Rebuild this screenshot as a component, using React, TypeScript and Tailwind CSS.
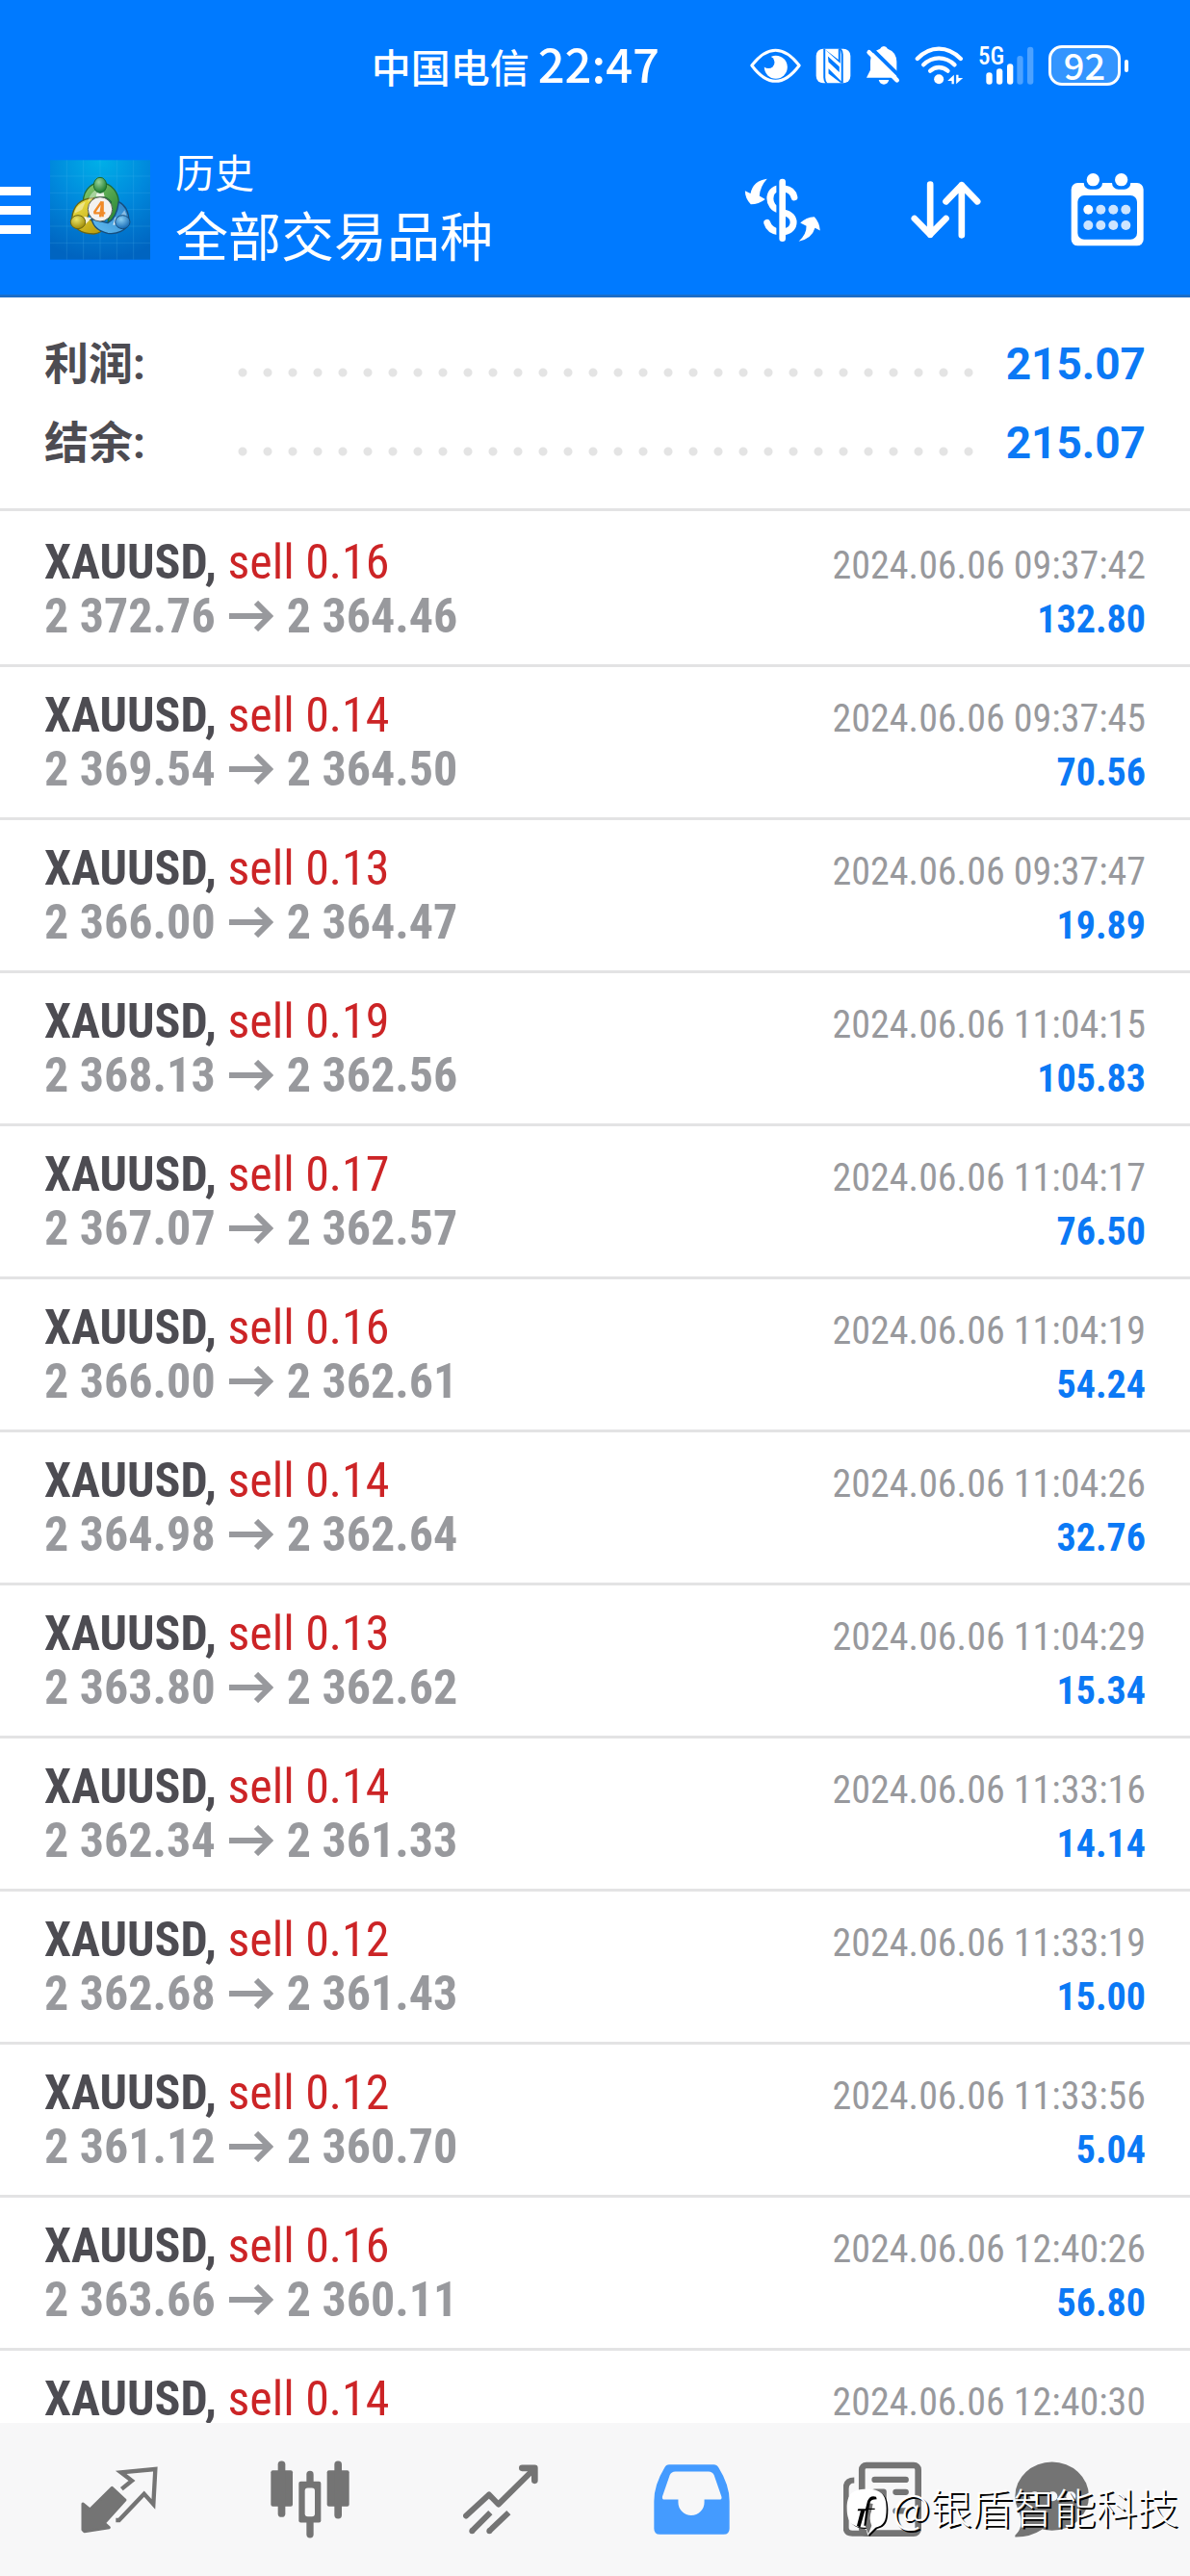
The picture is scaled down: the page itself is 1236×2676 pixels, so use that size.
import type { ReactNode } from 'react';

type Deal = { volume: string; open: string; close: string; time: string; profit: string };

const deals: Deal[] = [
  { volume: '0.16', open: '2 372.76', close: '2 364.46', time: '09:37:42', profit: '132.80' },
  { volume: '0.14', open: '2 369.54', close: '2 364.50', time: '09:37:45', profit: '70.56' },
  { volume: '0.13', open: '2 366.00', close: '2 364.47', time: '09:37:47', profit: '19.89' },
  { volume: '0.19', open: '2 368.13', close: '2 362.56', time: '11:04:15', profit: '105.83' },
  { volume: '0.17', open: '2 367.07', close: '2 362.57', time: '11:04:17', profit: '76.50' },
  { volume: '0.16', open: '2 366.00', close: '2 362.61', time: '11:04:19', profit: '54.24' },
  { volume: '0.14', open: '2 364.98', close: '2 362.64', time: '11:04:26', profit: '32.76' },
  { volume: '0.13', open: '2 363.80', close: '2 362.62', time: '11:04:29', profit: '15.34' },
  { volume: '0.14', open: '2 362.34', close: '2 361.33', time: '11:33:16', profit: '14.14' },
  { volume: '0.12', open: '2 362.68', close: '2 361.43', time: '11:33:19', profit: '15.00' },
  { volume: '0.12', open: '2 361.12', close: '2 360.70', time: '11:33:56', profit: '5.04' },
  { volume: '0.16', open: '2 363.66', close: '2 360.11', time: '12:40:26', profit: '56.80' },
  { volume: '0.14', open: '', close: '', time: '12:40:30', profit: '' },
];

function EyeIcon() {
  return (
    <svg className="h-[36px] w-[53px]" viewBox="59 59 158 108" aria-hidden="true">
      <path d="M64 113C90 80 115 66 138 66S186 80 212 113C186 148 161 162 138 162S90 148 64 113Z" fill="none" stroke="#fff" strokeWidth="9" strokeLinejoin="round" />
      <circle cx="139" cy="118" r="36" fill="#fff" />
      <circle cx="116" cy="103" r="19" fill="#007aff" />
    </svg>
  );
}

function NfcIcon() {
  return (
    <svg className="h-[37px] w-[37px]" viewBox="263 58 110 112" aria-hidden="true">
      <rect x="264" y="60" width="108" height="108" rx="22" fill="#fff" />
      <path d="M287 60H293V150Q293 162 300 169H294Q287 162 287 150Z M290 60 340 106V60H334V94Z" fill="#007aff" />
      <path d="M349 168H343V78Q343 66 336 59H342Q349 66 349 78Z" fill="#007aff" />
      <path d="M301 84 337 116V134L303 102Z M303 122 347 166H340L303 138Z" fill="#007aff" />
    </svg>
  );
}

function BellOffIcon() {
  return (
    <svg className="h-[40px] w-[36px]" viewBox="418 54 106 120" aria-hidden="true">
      <path d="M474 54q8 0 12 8q27 10 28 40V152H420l12-24V100q0-28 30-38q4-8 12-8Z" fill="#fff" />
      <path d="M420 46 536 160" stroke="#007aff" strokeWidth="12" />
      <path d="M428 73 515 160" stroke="#fff" strokeWidth="14" strokeLinecap="round" />
      <path d="M458 159H490Q486 173 474 173T458 159Z" fill="#fff" />
    </svg>
  );
}

function WifiIcon() {
  return (
    <svg className="h-[40px] w-[51px]" viewBox="568 54 152 120" aria-hidden="true">
      <g fill="none" stroke="#fff" strokeWidth="13" strokeLinecap="round">
        <path d="M576 93Q606 62 643 62T711 93" />
        <path d="M595 112Q616 91 643 91T692 112" />
        <path d="M616 131Q628 120 643 120T671 131" />
      </g>
      <circle cx="643" cy="157" r="15" fill="#fff" />
      <path d="M690 143V172H683V162H670Z M697 172V143H704V153H718Z" fill="#fff" />
    </svg>
  );
}

function SignalIcon() {
  return (
    <div className="relative h-[40px] w-[58px]">
      <svg className="h-[40px] w-[58px]" viewBox="764 54 174 120" aria-hidden="true">
        <g fill="#fff">
          <rect x="789" y="136" width="19" height="37" rx="9" />
          <rect x="821" y="124" width="19" height="49" rx="9" />
          <rect x="854" y="109" width="19" height="64" rx="9" />
        </g>
        <g fill="#4da2ff">
          <rect x="885" y="84" width="19" height="89" rx="9" />
          <rect x="917" y="56" width="19" height="117" rx="9" />
        </g>
      </svg>
      <span className="absolute left-0 top-0 font-['Roboto_Condensed',sans-serif] text-[25px] font-medium leading-[22px]">5G</span>
    </div>
  );
}

function Battery() {
  return (
    <div className="flex items-center gap-[4px]">
      <div className="flex h-[42px] w-[75px] items-center justify-center rounded-[14px] border-[3px] border-white bg-[#3395ff] pb-[2px] text-[38px] font-medium leading-[34px]">
        92
      </div>
      <div className="h-[13px] w-[4px] rounded-full bg-white" />
    </div>
  );
}

function AppLogo() {
  return (
    <svg className="h-[104px] w-[104px] shrink-0" viewBox="24 20 312 310" aria-hidden="true">
      <defs>
        <radialGradient id="sky" cx="0.5" cy="0" r="1">
          <stop offset="0" stopColor="#00b0e8" />
          <stop offset="0.5" stopColor="#0088dc" />
          <stop offset="1" stopColor="#0064c0" />
        </radialGradient>
        <linearGradient id="green" x1="0" y1="0" x2="1" y2="1">
          <stop offset="0" stopColor="#8ccc70" />
          <stop offset="1" stopColor="#1f8030" />
        </linearGradient>
        <linearGradient id="gold" x1="0" y1="0" x2="0.7" y2="1">
          <stop offset="0" stopColor="#f2e84a" />
          <stop offset="1" stopColor="#bca010" />
        </linearGradient>
        <linearGradient id="blue" x1="1" y1="0" x2="0" y2="1">
          <stop offset="0" stopColor="#2a80c8" />
          <stop offset="1" stopColor="#64c0f4" />
        </linearGradient>
        <radialGradient id="greenBall" cx="0.4" cy="0.3" r="0.7">
          <stop offset="0" stopColor="#9ad49a" />
          <stop offset="1" stopColor="#1a7a2c" />
        </radialGradient>
        <radialGradient id="goldBall" cx="0.4" cy="0.3" r="0.7">
          <stop offset="0" stopColor="#ece66a" />
          <stop offset="1" stopColor="#a08c08" />
        </radialGradient>
        <radialGradient id="blueBall" cx="0.4" cy="0.3" r="0.7">
          <stop offset="0" stopColor="#8cd0f4" />
          <stop offset="1" stopColor="#1468b4" />
        </radialGradient>
      </defs>
      <rect x="24" y="20" width="312" height="310" fill="url(#sky)" />
      <path d="M76 20V330M128 20V330M180 20V330M232 20V330M284 20V330M24 70H336M24 122H336M24 174H336M24 226H336M24 278H336" stroke="#5cc4f4" strokeOpacity="0.28" strokeWidth="2" />
      <g strokeLinejoin="round">
        <path d="M128 166C122 118 148 92 180 90C216 92 240 120 238 160C234 188 220 206 204 216L214 150C196 128 162 130 150 160Z" fill="url(#green)" stroke="#216b32" strokeWidth="4" />
        <path d="M160 138C122 140 96 158 92 202C94 230 120 250 160 250C178 248 184 242 192 232L140 200Z" fill="url(#gold)" stroke="#6a6412" strokeWidth="4" />
        <path d="M238 150C262 162 270 186 270 214C262 240 232 252 204 248C176 242 158 226 154 204L204 216C222 206 234 184 238 150Z" fill="url(#blue)" stroke="#164f80" strokeWidth="4" />
        <path d="M142 150C148 120 168 112 174 112L176 122L164 134Z M100 186C104 164 122 154 134 150L124 174Z M256 176C264 192 264 204 258 214L240 198Z" fill="#fff" opacity="0.4" />
        <path d="M172 118H190L194 134H166Z M130 196 154 200 134 220Z M228 196 220 222 236 220Z" fill="#fff" opacity="0.85" />
        <ellipse cx="180" cy="98" rx="20" ry="24" fill="url(#greenBall)" stroke="#1c6b2c" strokeWidth="3" />
        <ellipse cx="111" cy="213" rx="23" ry="21" fill="url(#goldBall)" stroke="#6a6412" strokeWidth="3" />
        <ellipse cx="250" cy="213" rx="23" ry="21" fill="url(#blueBall)" stroke="#164f80" strokeWidth="3" />
      </g>
      <circle cx="180" cy="173" r="38" fill="#f3f2f0" stroke="#55605a" strokeWidth="3" />
      <path d="M185 149 163 181V185H196M187 149 180 197M188 149V197" fill="none" stroke="#f08a28" strokeWidth="7" strokeLinejoin="round" />
    </svg>
  );
}

function CurrencyIcon() {
  return (
    <svg className="h-[67px] w-[80px]" viewBox="25 28 240 202" aria-hidden="true">
      <g fill="none" stroke="#fff" strokeWidth="21">
        <path d="M134 60C96 64 96 118 134 128" />
        <path d="M150 61Q176 64 181 88" strokeLinecap="round" />
        <path d="M150 137C188 144 188 190 150 196" />
        <path d="M96 168Q103 192 134 197" strokeLinecap="round" />
      </g>
      <rect x="125" y="40" width="12" height="180" fill="#007aff" />
      <rect x="134" y="30" width="20" height="197" rx="10" fill="#fff" />
      <path d="M96 30Q52 36 44 76L27 68Q27 92 45 110Q70 110 90 94L72 84Q74 54 96 30Z" fill="#fff" />
      <path d="M195 226Q220 204 219 178L200 168Q218 150 244 149Q260 166 262 192L246 184Q236 218 195 226Z" fill="#fff" />
    </svg>
  );
}

function SortIcon() {
  return (
    <svg className="h-[60px] w-[73px]" viewBox="617 114 218 180" aria-hidden="true">
      <g fill="none" stroke="#fff" strokeWidth="20" strokeLinecap="round" strokeLinejoin="round">
        <path d="M677 125V281M628 231 677 281 726 231" />
        <path d="M775 283V127M726 178 775 127 824 178" />
      </g>
    </svg>
  );
}

function CalendarIcon() {
  return (
    <svg className="h-[76px] w-[76px]" viewBox="1114 86 228 228" aria-hidden="true">
      <rect x="1116" y="116" width="225" height="196" rx="20" fill="#fff" />
      <rect x="1136" y="155" width="185" height="137" rx="20" fill="#007aff" />
      <rect x="1155" y="86" width="58" height="50" rx="20" fill="#007aff" />
      <rect x="1243" y="86" width="58" height="50" rx="20" fill="#007aff" />
      <circle cx="1184" cy="106" r="20" fill="#fff" />
      <circle cx="1272" cy="106" r="20" fill="#fff" />
      <circle cx="1169" cy="199" r="15" fill="#fff" />
      <g fill="#cce4ff">
        <circle cx="1208" cy="199" r="15" />
        <circle cx="1247" cy="199" r="15" />
        <circle cx="1286" cy="199" r="15" />
        <circle cx="1169" cy="248" r="15" />
        <circle cx="1208" cy="248" r="15" />
        <circle cx="1247" cy="248" r="15" />
        <circle cx="1286" cy="248" r="15" />
      </g>
    </svg>
  );
}

function QuotesIcon() {
  return (
    <svg className="h-[70px] w-[80px]" viewBox="133 364 240 210" aria-hidden="true">
      <path d="M139 481 161 499 230 431 271 469 206 541 221 555 144 567 139 562Z" fill="#747474" stroke="#747474" strokeWidth="9" strokeLinejoin="round" />
      <path d="M260 435 292 409 258 383 365 373 359 482 330 450 252 532H242" fill="none" stroke="#747474" strokeWidth="13" />
    </svg>
  );
}

function CandlesIcon() {
  return (
    <svg className="h-[81px] w-[82px]" viewBox="722 347 246 242" aria-hidden="true">
      <g fill="#747474">
        <rect x="723" y="377" width="68" height="113" rx="6" />
        <rect x="745" y="348" width="23" height="175" rx="11" />
        <rect x="898" y="377" width="69" height="113" rx="6" />
        <rect x="921" y="348" width="23" height="180" rx="11" />
        <rect x="834" y="379" width="22" height="209" rx="11" />
        <rect x="810" y="412" width="69" height="128" rx="6" />
      </g>
      <rect x="829" y="432" width="31" height="89" rx="9" fill="#f7f7f8" />
    </svg>
  );
}

function TradeIcon() {
  return (
    <svg className="h-[73px] w-[78px]" viewBox="1322 356 234 218" aria-hidden="true">
      <g fill="none" stroke="#747474" strokeWidth="18">
        <path d="M1331 516 1403 450 1432 480 1543 370" strokeLinecap="round" strokeLinejoin="round" />
        <path d="M1506 367H1545V406" strokeWidth="20" strokeLinecap="round" strokeLinejoin="round" />
        <path d="M1350 563 1407 506M1404 563 1464 506" />
      </g>
      <circle cx="1350" cy="563" r="9" fill="#747474" />
      <circle cx="1404" cy="563" r="9" fill="#747474" />
    </svg>
  );
}

function HistoryIcon() {
  return (
    <svg className="h-[73px] w-[79px]" viewBox="176 356 236 218" aria-hidden="true">
      <path
        fillRule="evenodd"
        fill="#449bff"
        d="M224 357H362Q372 357 377 366Q411 420 411 470V555Q411 573 393 573H195Q177 573 177 555V470Q177 420 210 366Q214 357 224 357ZM243 378Q231 378 226 389L203 455Q201 465 209 465H252V474A40.500 40 0 0 0 333 474V465H380Q389 465 386 455L363 389Q358 378 346 378Z"
      />
    </svg>
  );
}

function NewsIcon() {
  return (
    <svg className="h-[79px] w-[81px]" viewBox="48 32 244 236" aria-hidden="true">
      <path d="M82 90Q56 90 56 116V238Q56 256 76 256H200" fill="none" stroke="#747474" strokeWidth="18" />
      <rect x="106" y="43" width="176" height="213" rx="14" fill="#f7f7f8" stroke="#747474" strokeWidth="20" />
      <path d="M146 88H243M212 127H243M212 186H243" stroke="#747474" strokeWidth="19" strokeLinecap="round" />
      <rect x="137" y="117" width="46" height="78" rx="9" fill="#747474" />
    </svg>
  );
}

function ChatIcon() {
  return (
    <svg className="h-[79px] w-[78px]" viewBox="582 32 234 236" aria-hidden="true">
      <ellipse cx="698" cy="140" rx="115" ry="107" fill="#747474" />
      <path d="M596 190Q612 236 583 262V267Q630 268 668 243Z" fill="#747474" />
      <g fill="#f7f7f8">
        <circle cx="644" cy="140" r="15" />
        <circle cx="700" cy="140" r="15" />
        <circle cx="757" cy="140" r="15" />
      </g>
    </svg>
  );
}

function WatermarkLogo() {
  const body = 'M106 126C150 126 168 142 168 186C168 226 160 240 134 246L110 270Q106 262 106 246C62 246 45 230 45 186C45 142 62 126 106 126Z';
  return (
    <svg className="h-[50px] w-[45px] shrink-0" viewBox="43 124 135 150" aria-hidden="true">
      <path d={body} fill="#000" transform="translate(5 4)" />
      <path d={body} fill="#fff" />
      <path d="M112 170L102 240L112 266L122 240Q112 216 122 192L126 172Z" fill="#747474" />
      <path d="M136 150Q116 144 109 164L103 188H80L78 194H88L76 240L86 246L101 194H104L98 240H104L112 190H132V186H113L117 168Q120 158 138 158Z" fill="#000" />
    </svg>
  );
}

function SummaryRow({ label, value }: { label: string; value: string }) {
  return (
    <div className="flex items-baseline text-[46px] font-bold leading-[82px]">
      <dt className="w-[193px] shrink-0 text-[#4d4c52]">{label}</dt>
      <div className="mb-[20px] mr-[27px] h-[24px] flex-1 self-end bg-[radial-gradient(circle,#e4e4e4_4px,transparent_5px)] bg-[length:26px_24px] bg-repeat-x" />
      <dd className="text-[#0b79f5]">{value}</dd>
    </div>
  );
}

function DealRow({ deal }: { deal: Deal }) {
  return (
    <li className="border-b-[3px] border-[#e3e3e4] px-[46px] py-[22px] font-['Roboto_Condensed',sans-serif] text-[50px] leading-[56px]">
      <div className="flex h-[56px] items-baseline justify-between">
        <p className="text-[#cc2426]">
          <span className="font-bold text-[#4d4c52]">XAUUSD,</span> sell {deal.volume}
        </p>
        <time className="text-[40px] text-[#98999d]">2024.06.06 {deal.time}</time>
      </div>
      {deal.profit && (
        <div className="flex h-[56px] items-baseline justify-between font-bold">
          <p className="flex items-center gap-[14px] text-[#98999d]">
            <span>{deal.open}</span>
            <svg className="h-[32px] w-[46px]" viewBox="0 0 46 32" fill="none" stroke="currentColor" strokeWidth="6" aria-label="至">
              <path d="M0 16H41M28 2 42 16 28 30" />
            </svg>
            <span>{deal.close}</span>
          </p>
          <span className="text-[40px] text-[#0b79f5]">{deal.profit}</span>
        </div>
      )}
    </li>
  );
}

const tabs: { name: string; icon: ReactNode }[] = [
  { name: '行情', icon: <QuotesIcon /> },
  { name: '图表', icon: <CandlesIcon /> },
  { name: '交易', icon: <TradeIcon /> },
  { name: '历史', icon: <HistoryIcon /> },
  { name: '新闻', icon: <NewsIcon /> },
  { name: '消息', icon: <ChatIcon /> },
];

export default function App() {
  return (
    <div className="flex h-screen flex-col bg-white font-['Roboto','Noto_Sans_CJK_SC',sans-serif]">
      <header className="shrink-0 border-b-[3px] border-[#1a6dc8] bg-[#007aff] font-['Noto_Sans_CJK_SC',sans-serif] text-white">
        <div className="flex h-[130px] items-center justify-end pr-[64px] pt-[6px]">
          <p className="mr-[94px] flex items-baseline gap-[9px] pb-[4px] font-medium">
            <span className="text-[41px] leading-[60px]">中国电信</span>
            <span className="text-[49px] leading-[60px]">22:47</span>
          </p>
          <div className="flex items-center gap-[15px]">
            <EyeIcon />
            <NfcIcon />
            <BellOffIcon />
            <WifiIcon />
            <SignalIcon />
            <Battery />
          </div>
        </div>
        <div className="flex h-[176px] items-center pr-[48px]">
          <button aria-label="菜单" className="mr-[20px] flex w-[32px] flex-col gap-[11px]">
            <span className="h-[9px] bg-white" />
            <span className="h-[9px] bg-white" />
            <span className="h-[9px] bg-white" />
          </button>
          <AppLogo />
          <div className="ml-[26px] flex-1 pb-[8px]">
            <p className="text-[41px] leading-[56px]">历史</p>
            <h1 className="text-[55px] leading-[74px]">全部交易品种</h1>
          </div>
          <div className="flex items-center gap-[93px]">
            <button aria-label="货币"><CurrencyIcon /></button>
            <button aria-label="排序"><SortIcon /></button>
            <button aria-label="日期"><CalendarIcon /></button>
          </div>
        </div>
      </header>

      <main className="min-h-0 flex-1 overflow-y-auto [scrollbar-width:none]">
        <dl className="border-b-[3px] border-[#e3e3e4] px-[46px] pb-[27px] pt-[28px]">
          <SummaryRow label="利润:" value="215.07" />
          <SummaryRow label="结余:" value="215.07" />
        </dl>
        <ul className="pt-[3px]">
          {deals.map((deal) => (
            <DealRow key={deal.time} deal={deal} />
          ))}
        </ul>
      </main>

      <nav className="relative grid h-[159px] shrink-0 grid-cols-[repeat(5,198fr)_156fr] items-center bg-[#f7f7f8] pl-[25px] pr-[65px]">
        {tabs.map((tab) => (
          <button key={tab.name} aria-label={tab.name} className="flex justify-center">
            {tab.icon}
          </button>
        ))}
        <div className="pointer-events-none absolute right-[12px] top-[63px] flex items-start gap-[3px]">
          <div className="pt-[5px]">
            <WatermarkLogo />
          </div>
          <span className="font-['Noto_Sans_CJK_SC',sans-serif] text-[43px] font-light leading-[46px] text-white [text-shadow:2px_2px_0_#000]">
            @银盾智能科技
          </span>
        </div>
      </nav>
    </div>
  );
}
